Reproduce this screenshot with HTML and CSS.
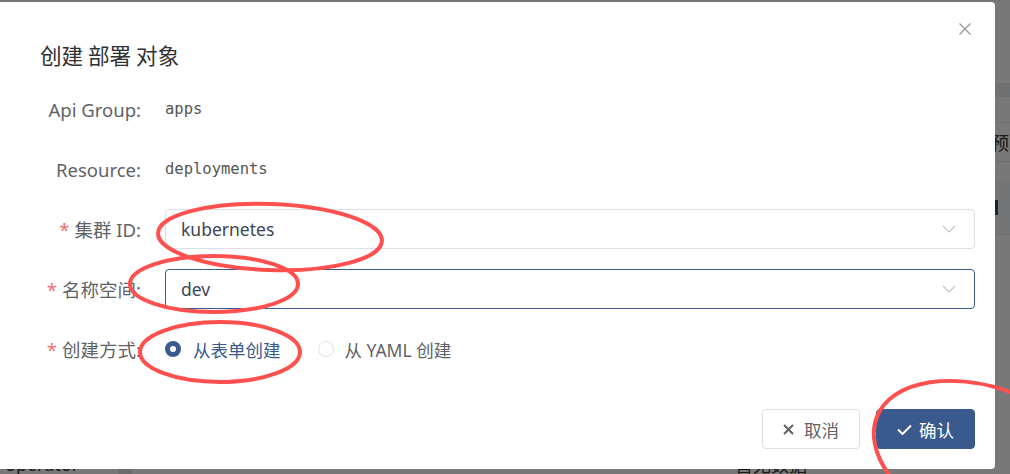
FILE: index.html
```html
<!DOCTYPE html>
<html lang="zh-CN">
<head>
    <meta charset="UTF-8">
    <meta name="viewport" content="width=device-width, initial-scale=1.0">
    <title>创建 部署 对象</title>
    <link rel="stylesheet" href="styles.css">
</head>
<body>
    <!-- page behind the dialog -->
    <div class="page">
        <div class="page-nav"></div>
        <div class="page-tabs"></div>
        <div class="page-row"></div>
        <div class="page-row page-head">
            <span></span>
            <span>预留</span>
        </div>
        <div class="page-gap"></div>
        <div class="page-row page-search">
            <span></span>
            <span class="page-btn"></span>
        </div>
        <div class="page-body"></div>
        <div class="page-foot">
            <span class="foot-name">operator</span>
            <span class="foot-tag"></span>
            <span class="foot-empty">暂无数据</span>
        </div>
    </div>
    <div class="mask"></div>

    <div class="dialog">
        <div class="dialog-header">
            <span class="dialog-title">创建 部署 对象</span>
            <button class="dialog-close" aria-label="close">
                <svg width="12" height="12" viewBox="0 0 12 12"><path d="M0.5 0.5 L11.5 11.5 M11.5 0.5 L0.5 11.5" stroke="#909399" stroke-width="1.2" fill="none"/></svg>
            </button>
        </div>

        <form class="form">
            <label class="form-label">Api Group:</label>
            <div class="form-value mono">apps</div>

            <label class="form-label">Resource:</label>
            <div class="form-value mono">deployments</div>

            <label class="form-label"><span class="req">*</span>集群 ID:</label>
            <div class="select">
                <span>kubernetes</span>
                <svg class="arrow" width="14" height="8" viewBox="0 0 14 8"><path d="M1 1 L7 7 L13 1" stroke="#c0c4cc" stroke-width="1.2" fill="none"/></svg>
            </div>

            <label class="form-label"><span class="req">*</span>名称空间:</label>
            <div class="select is-focus">
                <span>dev</span>
                <svg class="arrow" width="14" height="8" viewBox="0 0 14 8"><path d="M1 1 L7 7 L13 1" stroke="#c0c4cc" stroke-width="1.2" fill="none"/></svg>
            </div>

            <label class="form-label"><span class="req">*</span>创建方式:</label>
            <div class="radio-group">
                <span class="radio is-checked"><span class="radio-dot"></span>从表单创建</span>
                <span class="radio"><span class="radio-dot"></span>从 YAML 创建</span>
            </div>
        </form>

        <div class="dialog-footer">
            <button class="btn">
                <svg width="11" height="11" viewBox="0 0 11 11"><path d="M1 1 L10 10 M10 1 L1 10" stroke="#606266" stroke-width="2" fill="none"/></svg>
                取消
            </button>
            <button class="btn btn-primary">
                <svg width="15" height="11" viewBox="0 0 15 11"><path d="M1 5.5 L5.5 10 L14 1.5" stroke="#fff" stroke-width="2" fill="none"/></svg>
                确认
            </button>
        </div>
    </div>

    <!-- red marks drawn on the screenshot -->
    <svg class="marks" width="1010" height="474" viewBox="0 0 1010 474">
        <ellipse cx="270" cy="237" rx="112" ry="33" transform="rotate(2 270 237)"/>
        <ellipse cx="214" cy="284" rx="84" ry="28"/>
        <ellipse cx="220" cy="352" rx="80" ry="30"/>
        <ellipse cx="992" cy="463" rx="124" ry="73" transform="rotate(22 992 463)"/>
    </svg>
</body>
</html>
```

FILE: styles.css
```css
html, body {
    margin: 0;
    width: 1010px;
    height: 474px;
    overflow: hidden;
}
body {
    position: relative;
    font-family: "Noto Sans", "Noto Sans CJK SC", sans-serif;
    font-size: 18px;
    color: #606266;
    background-color: #fff;
}

/* background page */
.page {
    display: flex;
    flex-direction: column;
    height: 474px;
}
.page-nav {
    height: 83px;
}
.page-tabs {
    height: 14px;
    background-color: #ebeef2;
}
.page-row {
    display: grid;
    grid-template-columns: 991px 1fr;
    align-items: center;
    height: 25px;
    border-bottom: 1px solid #e4e7ed;
}
.page-head {
    height: 38px;
    color: #333;
    font-family: "Noto Sans CJK SC", sans-serif;
    font-size: 18px;
    white-space: nowrap;
    overflow: hidden;
}
.page-gap {
    height: 19px;
}
.page-search {
    height: 53px;
    background-color: #f5f7fa;
}
.page-btn {
    margin-left: 4px;
    width: 3px;
    height: 15px;
    background-color: #344d73;
}
.page-body {
    flex: 1;
}
.page-foot {
    display: flex;
    align-items: flex-start;
    height: 20px;
    color: #333;
    font-size: 18px;
    line-height: 20px;
}
.foot-name {
    width: 118px;
    padding-left: 5px;
    box-sizing: border-box;
}
.foot-tag {
    width: 14px;
    height: 20px;
    background-color: #e6e6e6;
}
.foot-empty {
    margin-left: 603px;
    font-family: "Noto Sans CJK SC", sans-serif;
}
.mask {
    position: absolute;
    inset: 0;
    background-color: rgba(0, 0, 0, 0.53);
}

/* dialog */
.dialog {
    position: absolute;
    left: 0;
    top: 2px;
    width: 995px;
    height: 467px;
    box-sizing: border-box;
    padding-right: 20px;
    background-color: #fff;
    border-radius: 0 4px 4px 0;
}
.dialog-header {
    padding: 40px 0 0 40px;
    height: 26px;
}
.dialog-title {
    font-family: "Noto Sans CJK SC", sans-serif;
    font-size: 21.6px;
    line-height: 26px;
    color: #303133;
}
.dialog-close {
    position: absolute;
    top: 21px;
    right: 24px;
    padding: 0;
    border: none;
    background: none;
    line-height: 0;
}
.form {
    display: grid;
    grid-template-columns: 141px 1fr;
    grid-auto-rows: 40px;
    column-gap: 24px;
    row-gap: 20px;
    margin: 21px 0 0;
}
.form-label {
    display: flex;
    align-items: center;
    justify-content: flex-end;
    white-space: nowrap;
    font-size: 18.5px;
    color: #606266;
}
.req {
    color: #f56c6c;
    margin-right: 5px;
}
.form-value {
    display: flex;
    align-items: center;
}
.mono {
    font-family: "DejaVu Sans Mono", monospace;
    font-size: 15.5px;
    color: #555;
}
.select {
    display: flex;
    align-items: center;
    justify-content: space-between;
    box-sizing: border-box;
    padding: 0 18px 0 15px;
    border: 1px solid #dcdfe6;
    border-radius: 4px;
    font-size: 17.5px;
    color: #3d4456;
}
.select.is-focus {
    border-color: #3a5a8e;
}
.radio-group {
    display: flex;
    align-items: center;
    gap: 37px;
}
.radio {
    display: flex;
    align-items: center;
    gap: 12px;
    font-family: "Noto Sans", "Noto Sans CJK SC", sans-serif;
    font-size: 17.5px;
    color: #606266;
}
.radio + .radio {
    gap: 11px;
}
.radio-dot {
    width: 16px;
    height: 16px;
    box-sizing: border-box;
    border: 1px solid #dcdfe6;
    border-radius: 50%;
}
.radio.is-checked {
    color: #3a5a8e;
}
.radio.is-checked .radio-dot {
    border: 5px solid #3a5a8e;
    background-color: #fff;
}
.dialog-footer {
    display: flex;
    justify-content: flex-end;
    gap: 16px;
    margin-top: 40px;
}
.btn {
    display: flex;
    align-items: center;
    justify-content: center;
    gap: 10px;
    width: 98px;
    height: 40px;
    padding: 0;
    border: 1px solid #dcdfe6;
    border-radius: 4px;
    background-color: #fff;
    color: #606266;
    font-family: "Noto Sans CJK SC", sans-serif;
    font-size: 17.5px;
}
.btn-primary {
    width: 99px;
    gap: 7px;
    border-color: #3a5a8e;
    background-color: #3a5a8e;
    color: #fff;
}

/* annotation overlay */
.marks {
    position: absolute;
    left: 0;
    top: 0;
    pointer-events: none;
}
.marks ellipse {
    fill: none;
    stroke: #ff5050;
    stroke-width: 4;
}
```
